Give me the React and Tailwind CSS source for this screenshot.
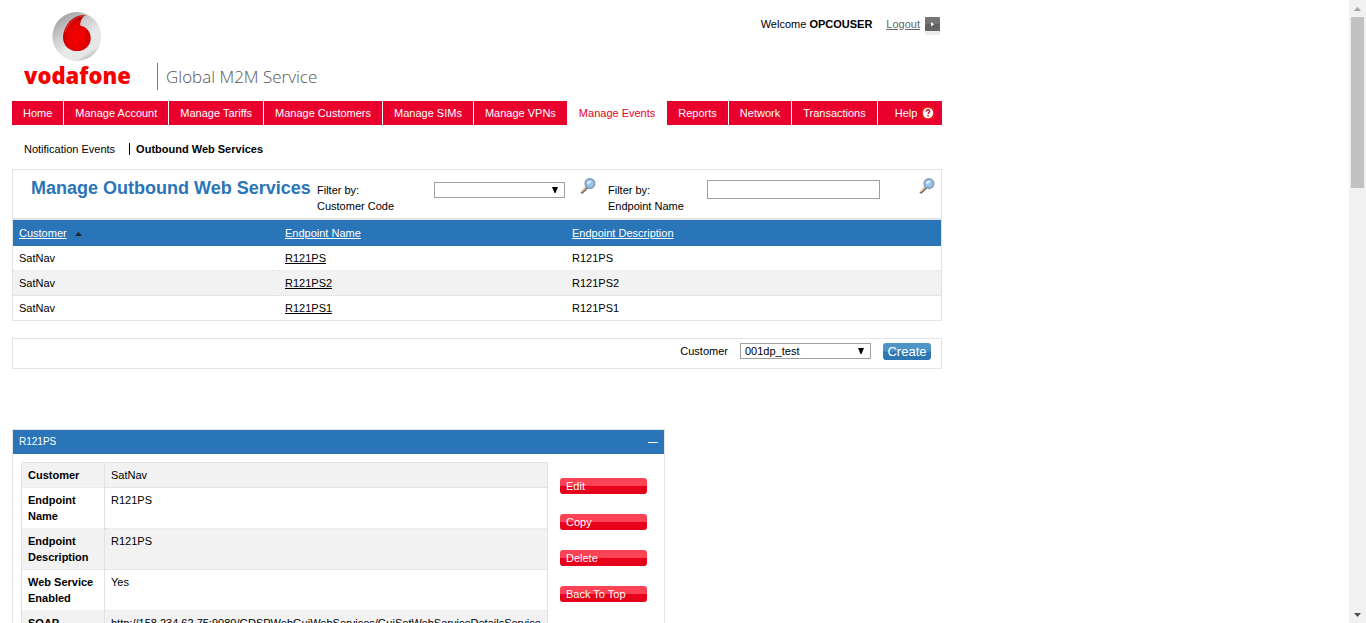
import React from "react";

const navItems = [
  "Home",
  "Manage Account",
  "Manage Tariffs",
  "Manage Customers",
  "Manage SIMs",
  "Manage VPNs",
  "Manage Events",
  "Reports",
  "Network",
  "Transactions",
];

const endpoints = [
  { customer: "SatNav", name: "R121PS", description: "R121PS" },
  { customer: "SatNav", name: "R121PS2", description: "R121PS2" },
  { customer: "SatNav", name: "R121PS1", description: "R121PS1" },
];

const details = [
  ["Customer", "SatNav"],
  ["Endpoint Name", "R121PS"],
  ["Endpoint Description", "R121PS"],
  ["Web Service Enabled", "Yes"],
  [
    "SOAP Endpoint",
    "http://158.234.62.75:9080/GDSPWebGuiWebServices/GuiSetWebServiceDetailsService",
  ],
];

function SpeechMark() {
  return (
    <svg viewBox="0 0 50 50" className="block size-[50px]" aria-hidden="true">
      <defs>
        <linearGradient id="ball" x1="0.2" y1="0.05" x2="0.8" y2="0.97">
          <stop offset="0" stopColor="#a2a2a2" />
          <stop offset="0.3" stopColor="#c9c9c9" />
          <stop offset="0.6" stopColor="#e8e8e8" />
          <stop offset="0.85" stopColor="#e6e6e6" />
          <stop offset="1" stopColor="#adadad" />
        </linearGradient>
        <radialGradient id="drop" cx="0.5" cy="0.62" r="0.55">
          <stop offset="0" stopColor="#f50000" />
          <stop offset="0.55" stopColor="#ea0000" />
          <stop offset="0.85" stopColor="#cf0000" />
          <stop offset="1" stopColor="#b00000" />
        </radialGradient>
      </defs>
      <circle cx="24.8" cy="24.5" r="24.4" fill="url(#ball)" />
      <path
        d="M33.8 3.1C27 2.6 20 6.2 16 11.4C12.9 15.5 11 20.4 11 25.2C11 33.2 17 39.1 24.9 39.1C32.7 39.1 38.7 33.6 38.7 26.2C38.7 19.2 34.2 14.8 28.2 13.5C28 9 30.2 5 33.8 3.1Z"
        fill="url(#drop)"
      />
      <path
        d="M32 3.8C26 4.4 20.6 7.8 17.2 12.2C15.4 14.6 14 17.2 13.2 20"
        fill="none"
        stroke="#f0504a"
        strokeWidth="0.7"
      />
    </svg>
  );
}

function Magnifier() {
  return (
    <svg viewBox="0 0 16 16" className="block size-4" aria-hidden="true">
      <path d="M2 14.4L6.4 10" stroke="#5f5a60" strokeWidth="2.6" strokeLinecap="round" />
      <path d="M1.6 13.8L5.8 9.7" stroke="#e8c49a" strokeWidth="1.5" strokeLinecap="round" />
      <circle cx="9.9" cy="5.6" r="5" fill="#9fc6ea" stroke="#8a95a8" strokeWidth="1.1" />
      <circle cx="9.9" cy="5.6" r="3.9" fill="none" stroke="#7ba9dc" strokeWidth="0.8" />
      <path d="M6.9 5.8C7 3.6 9 2.2 11.6 2.9C11 4.7 9.2 5.8 6.9 5.8Z" fill="#e4f3ff" />
    </svg>
  );
}

function SelectBox({ id, value }) {
  return (
    <div className="relative flex h-4 w-[131px] shrink-0">
      <select
        id={id}
        defaultValue={value}
        className="h-4 w-full appearance-none border border-[#a0a0a0] bg-white pl-1 text-[11px] leading-[14px]"
      >
        <option value={value}>{value}</option>
      </select>
      <svg
        viewBox="0 0 6 6"
        className="pointer-events-none absolute top-[5px] right-[7px] size-[6px]"
        aria-hidden="true"
      >
        <path d="M0 0H6L3.5 6H2.5Z" fill="#000" />
      </svg>
    </div>
  );
}

function Header() {
  return (
    <header className="flex h-[101px] items-start justify-between">
      <div className="flex">
        <div className="flex w-[145px] flex-col pt-3 pl-3">
          <div className="pl-7">
            <SpeechMark />
          </div>
          <span className="font-['Open_Sans',sans-serif] text-[22px] leading-[26px] font-extrabold text-[#f80000]">
            vodafone
          </span>
        </div>
        <div className="mt-[63px] flex h-[27px] items-center border-l border-[#777] pl-2">
          <span className="font-['Open_Sans',sans-serif] text-[17px] leading-[26px] font-light text-[#555]">
            Global M2M Service
          </span>
        </div>
      </div>
      <div className="flex items-start pt-4">
        <span>
          Welcome <b>OPCOUSER</b>
        </span>
        <a href="#logout" className="ml-[14px] flex items-start gap-[5px] text-[#666]">
          <span className="underline">Logout</span>
          <svg viewBox="0 0 15 18" className="mt-px mr-[2px] h-[18px] w-[15px]" aria-hidden="true">
            <rect width="15" height="14" rx="1" fill="#747474" />
            <rect y="7" width="15" height="7" rx="1" fill="#636363" />
            <rect y="14" width="15" height="4" fill="#ececec" />
            <path d="M6 5L9 7.2L6 9.4Z" fill="#fff" />
          </svg>
        </a>
      </div>
    </header>
  );
}

function Nav() {
  return (
    <nav className="flex h-6 gap-px text-white">
      {navItems.map((item) => (
        <a
          key={item}
          href="#nav"
          className={
            item === "Manage Events"
              ? "flex items-center bg-white px-[11px] whitespace-nowrap text-[#e60028]"
              : "flex items-center bg-[#e9002d] px-[11px] whitespace-nowrap"
          }
        >
          {item}
        </a>
      ))}
      <a href="#help" className="flex flex-1 items-center gap-[5px] bg-[#e9002d] pl-[17px]">
        Help
        <svg viewBox="0 0 12 12" className="size-3" aria-hidden="true">
          <rect width="12" height="12" fill="#ee2010" />
          <circle cx="6" cy="6" r="5.2" fill="#fff" />
          <path
            d="M4.3 4.6C4.3 3.4 5.1 2.8 6 2.8C7 2.8 7.7 3.5 7.7 4.4C7.7 5.5 6.1 5.6 6.1 7"
            fill="none"
            stroke="#e2001a"
            strokeWidth="1.4"
          />
          <rect x="5.3" y="8" width="1.5" height="1.5" fill="#e2001a" />
        </svg>
      </a>
    </nav>
  );
}

function ListPanel() {
  return (
    <section className="mt-[12px] border border-[#e4e4e4]">
      <div className="flex h-[50px] items-start border-b-2 border-[#e4e4e4] pr-[6px]">
        <h1 className="w-[304px] shrink-0 pt-[8px] pl-[18px] text-[18px] leading-5 font-bold whitespace-nowrap text-[#2a75b7]">
          Manage Outbound Web Services
        </h1>
        <label htmlFor="code" className="w-[117px] pt-3">
          Filter by:
          <br />
          Customer Code
        </label>
        <div className="pt-3">
          <SelectBox id="code" value="" />
        </div>
        <button type="button" aria-label="Filter by customer code" className="mt-2 ml-[15px]">
          <Magnifier />
        </button>
        <label htmlFor="endpoint" className="ml-3 w-[99px] pt-3">
          Filter by:
          <br />
          Endpoint Name
        </label>
        <input
          id="endpoint"
          type="text"
          className="mt-[10px] h-[19px] w-[173px] border border-[#a0a0a0] bg-white px-1"
        />
        <button type="button" aria-label="Filter by endpoint name" className="mt-2 ml-auto">
          <Magnifier />
        </button>
      </div>
      <table className="w-full table-fixed border-separate border-spacing-0 text-left">
        <thead>
          <tr className="h-[26px] bg-[#2a75b7] text-white">
            <th className="w-[266px] px-[6px] font-normal">
              <a href="#customer" className="underline">
                Customer
              </a>
              <svg viewBox="0 0 7 4" className="ml-2 inline-block h-1 w-[7px]" aria-hidden="true">
                <path d="M3.5 0L7 4H0Z" fill="#222" />
              </svg>
            </th>
            <th className="w-[287px] px-[6px] font-normal">
              <a href="#name" className="underline">
                Endpoint Name
              </a>
            </th>
            <th className="px-[6px] font-normal">
              <a href="#description" className="underline">
                Endpoint Description
              </a>
            </th>
          </tr>
        </thead>
        <tbody className="[&_td]:h-[25px] [&_td]:border-b [&_td]:border-dotted [&_td]:border-[#dcdcdc] [&_td]:px-[6px] [&_tr:last-child_td]:h-6 [&_tr:last-child_td]:border-b-0 [&_tr:nth-child(even)]:bg-[#f2f2f2]">
          {endpoints.map((row) => (
            <tr key={row.name}>
              <td>{row.customer}</td>
              <td>
                <a href="#endpoint" className="underline">
                  {row.name}
                </a>
              </td>
              <td>{row.description}</td>
            </tr>
          ))}
        </tbody>
      </table>
    </section>
  );
}

function CreatePanel() {
  return (
    <section className="mt-[17px] flex h-[31px] items-start justify-end border border-[#e4e4e4] pt-1 pr-[10px]">
      <label htmlFor="customer" className="mr-3">
        Customer
      </label>
      <SelectBox id="customer" value="001dp_test" />
      <button
        type="button"
        className="ml-3 h-[17px] w-12 rounded-[3px] bg-linear-to-b from-[#4e94c8] from-45% to-[#2e77b3] to-55% text-[13px] leading-[17px] text-white"
      >
        Create
      </button>
    </section>
  );
}

function DetailPanel() {
  return (
    <section className="mt-[60px] w-full max-w-[653px] border border-[#e4e4e4]">
      <div className="flex h-6 items-center justify-between bg-[#2a75b7] px-[6px] text-white">
        <h2 className="text-[10px]">R121PS</h2>
        <button type="button" aria-label="Collapse" className="flex h-4 w-[10px] items-center">
          <span className="block h-px w-full bg-white" />
        </button>
      </div>
      <div className="flex gap-3 p-2">
        <table className="w-[527px] table-fixed border-separate border-spacing-0 border border-[#e2e2e2] text-left">
          <tbody className="[&_tr:nth-child(odd)]:bg-[#f2f2f2]">
            {details.map(([label, value]) => (
              <tr key={label}>
                <th className="w-[83px] border-r border-b border-[#e2e2e2] px-[6px] py-1 align-top font-bold [border-bottom-style:dotted]">
                  {label}
                </th>
                <td className="border-b border-dotted border-[#dcdcdc] px-[6px] py-1 align-top">
                  {value}
                </td>
              </tr>
            ))}
          </tbody>
        </table>
        <div className="flex w-[87px] flex-col gap-5 pt-4 text-white">
          {["Edit", "Copy", "Delete", "Back To Top"].map((action) => (
            <button
              key={action}
              type="button"
              className="h-4 rounded-[3px] bg-linear-to-b from-[#fb4355] from-50% to-[#e60019] to-50% px-[6px] text-left leading-4"
            >
              {action}
            </button>
          ))}
        </div>
      </div>
    </section>
  );
}

function ScrollBar() {
  return (
    <div className="flex w-[17px] shrink-0 flex-col bg-[#f1f1f1]" aria-hidden="true">
      <div className="flex h-[17px] items-center justify-center">
        <svg viewBox="0 0 7 4" className="h-1 w-[7px]">
          <path d="M3.5 0L7 4H0Z" fill="#a3a3a3" />
        </svg>
      </div>
      <div className="flex-1 px-[2px]">
        <div className="h-[171px] bg-[#c1c1c1]" />
      </div>
      <div className="flex h-[17px] items-center justify-center">
        <svg viewBox="0 0 7 4" className="h-1 w-[7px]">
          <path d="M0 0H7L3.5 4Z" fill="#505050" />
        </svg>
      </div>
    </div>
  );
}

export default function App() {
  return (
    <div className="flex h-screen overflow-hidden bg-white font-['Liberation_Sans',Arial,sans-serif] text-[11px] leading-4 text-black">
      <main className="min-w-0 flex-1 overflow-hidden pl-3">
        <div className="w-full max-w-[930px]">
          <Header />
          <Nav />
          <div className="flex h-8 items-end pl-3">
            <a href="#notification" className="pr-[14px]">
              Notification Events
            </a>
            <a href="#outbound" className="flex items-center gap-[6px] font-bold">
              <span className="h-3 w-px bg-black" />
              Outbound Web Services
            </a>
          </div>
          <ListPanel />
          <CreatePanel />
          <DetailPanel />
        </div>
      </main>
      <ScrollBar />
    </div>
  );
}
